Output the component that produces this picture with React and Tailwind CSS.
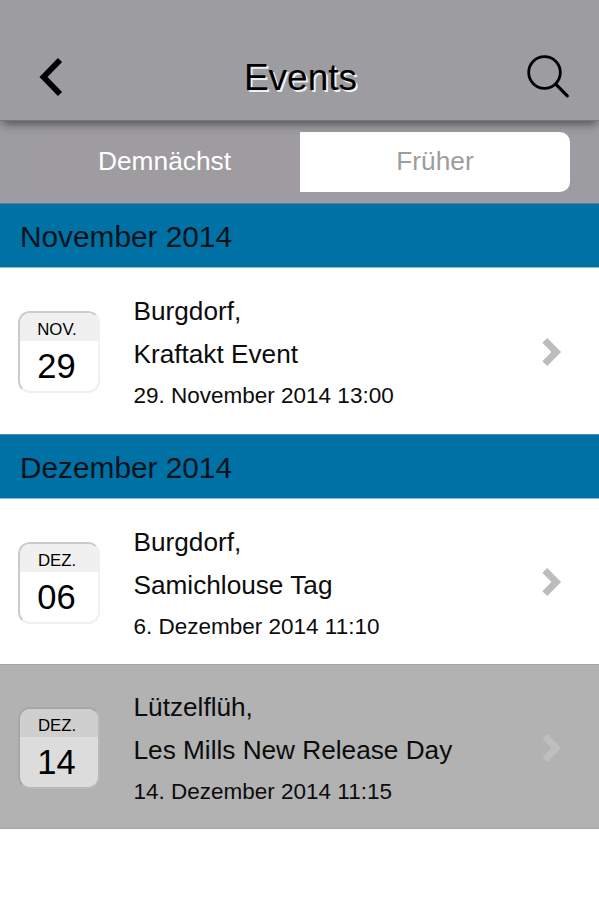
import React from 'react';
import clsx from 'clsx';

const sections = [
  {
    title: 'November 2014',
    events: [
      { month: 'NOV.', day: '29', place: 'Burgdorf,', name: 'Kraftakt Event', date: '29. November 2014 13:00' },
    ],
  },
  {
    title: 'Dezember 2014',
    events: [
      { month: 'DEZ.', day: '06', place: 'Burgdorf,', name: 'Samichlouse Tag', date: '6. Dezember 2014 11:10' },
      {
        month: 'DEZ.',
        day: '14',
        place: 'Lützelflüh,',
        name: 'Les Mills New Release Day',
        date: '14. Dezember 2014 11:15',
        active: true,
      },
    ],
  },
];

function Header() {
  return (
    <header className="relative z-10 flex h-[121px] items-end justify-between border-b border-[#77767b] bg-[#9d9ca1] px-[29px] pb-[20px] shadow-[0_5px_9px_-2px_rgba(40,40,45,0.65)]">
      <button aria-label="Zurück" className="flex h-12 w-11 items-center">
        <svg width="44" height="48" viewBox="0 0 44 48" fill="none" stroke="#000" strokeWidth="5.8">
          <path d="M31 8 L14.5 25 L31 42" />
        </svg>
      </button>
      <h1 className="pl-[2px] text-[37px] leading-[44px] text-black [text-shadow:2px_2px_0_rgba(255,255,255,0.85)]">
        Events
      </h1>
      <button aria-label="Suchen" className="flex h-12 w-11 items-center">
        <svg width="44" height="48" viewBox="0 0 44 48" fill="none" stroke="#000" strokeLinecap="round">
          <circle cx="18.5" cy="20.5" r="15.8" strokeWidth="2.8" />
          <path d="M30 32.3 L41.3 43.8" strokeWidth="3.2" />
        </svg>
      </button>
    </header>
  );
}

function Tabs() {
  return (
    <div className="flex h-[82px] bg-[#9d9ca1] px-[29px] pt-[11px] text-[26.3px] leading-[58px]">
      <button className="h-[60px] w-[271px] rounded-l-[10px] bg-[#9e9c9f] pb-[2px] text-white">Demnächst</button>
      <button className="h-[60px] w-[270px] rounded-r-[10px] bg-white pb-[2px] text-[#9d9d9d]">Früher</button>
    </div>
  );
}

function DateBadge({ month, day, active }) {
  return (
    <div
      className={clsx(
        'mt-[3px] h-[82px] w-[82px] shrink-0 overflow-hidden rounded-[12px] border-2 text-center text-black',
        active
          ? 'border-t-[#a6a6a6] border-l-[#a6a6a6] border-r-[#b8b8b8] border-b-[#b8b8b8] bg-[#dcdcdc]'
          : 'border-t-[#cbcbcb] border-l-[#cbcbcb] border-r-[#f0f0f0] border-b-[#f0f0f0] bg-white'
      )}
    >
      <div className={clsx('h-[28px] pr-[4px] pt-[3px] text-[16.8px] leading-[28px]', active ? 'bg-[#cfcfcf]' : 'bg-[#f0f0f0]')}>
        {month}
      </div>
      <div className="pr-[5px] pt-[4px] text-[34.5px] leading-[42px]">{day}</div>
    </div>
  );
}

function EventRow({ event }) {
  return (
    <li
      className={clsx(
        'flex h-[165.25px] items-center pl-[18px] pr-[36px]',
        event.active ? 'border-y border-y-[#a4a4a4] bg-[#b2b2b2]' : 'bg-white'
      )}
    >
      <DateBadge month={event.month} day={event.day} active={event.active} />
      <div className="ml-[33.5px] flex-1 whitespace-nowrap pt-[5px] text-[26.2px] leading-[43px] text-[#0c0c0c]">
        <p>{event.place}</p>
        <p>{event.name}</p>
        <p className="text-[22.5px] leading-[40px]">{event.date}</p>
      </div>
      <svg
        width="22"
        height="32"
        viewBox="0 0 22 32"
        fill="none"
        strokeWidth="6.8"
        className={clsx('mt-[2px]', event.active ? 'stroke-[#bfbfbf]' : 'stroke-[#bcbcbc]')}
      >
        <path d="M3.8 4.3 L15.3 16 L3.8 27.7" />
      </svg>
    </li>
  );
}

export default function App() {
  return (
    <div className="min-h-screen w-full overflow-hidden bg-white font-['Liberation_Sans',Arial,sans-serif]">
      <Header />
      <Tabs />
      {sections.map((section) => (
        <section key={section.title}>
          <h2 className="h-[65.3px] border-y border-t-[#4f87aa] border-b-[#8fb8d0] bg-[#0071a5] pl-[20px] text-[29.8px] leading-[65px] text-[#06131b]">
            {section.title}
          </h2>
          <ul>
            {section.events.map((event) => (
              <EventRow key={event.date} event={event} />
            ))}
          </ul>
        </section>
      ))}
    </div>
  );
}
